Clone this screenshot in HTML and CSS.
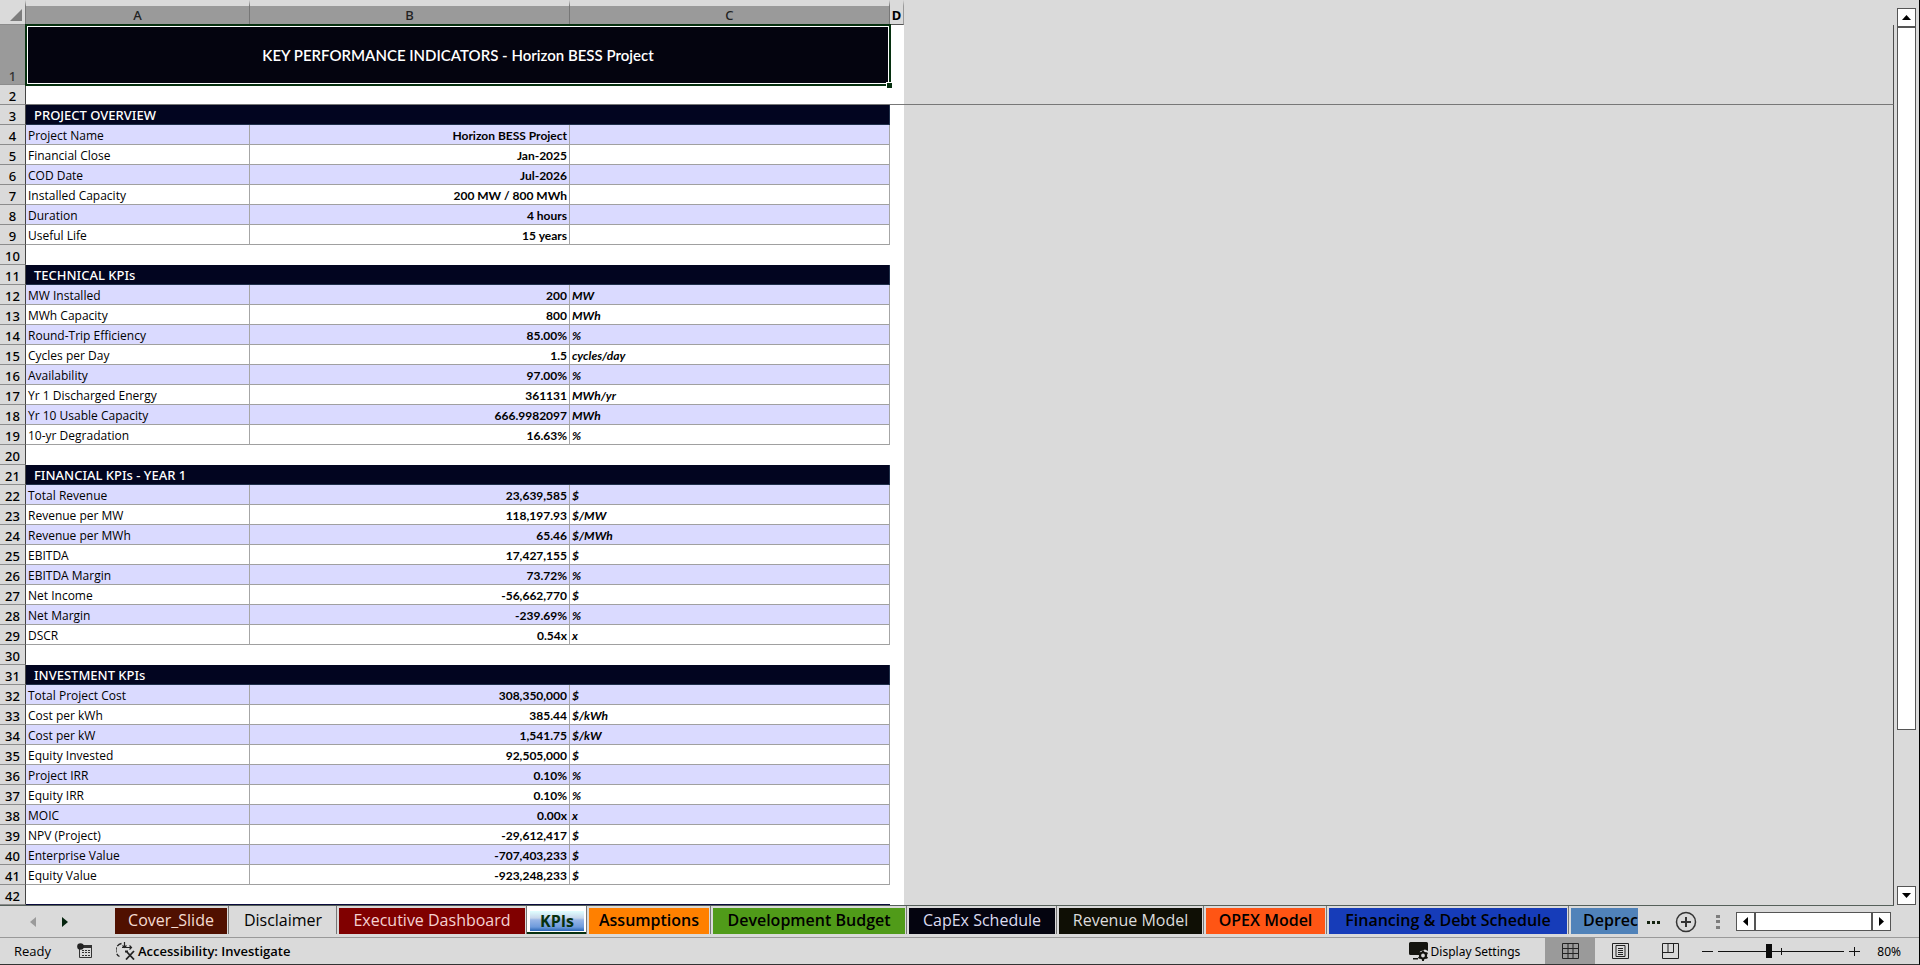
FILE: index.html
```html
<!DOCTYPE html>
<html lang="en">
<head>
<meta charset="utf-8">
<title>KPIs - Horizon BESS Project</title>
<link rel="stylesheet" href="styles.css">
</head>
<body>
<div class="workbook">
  <main class="workspace">
    <div class="sheet">
      <table class="grid">
        <colgroup><col class="col-head"><col class="col-a"><col class="col-b"><col class="col-c"><col class="col-d"><col></colgroup>
        <thead>
          <tr class="letters">
            <th class="corner"><svg width="12" height="12" viewBox="0 0 12 12" aria-hidden="true"><path d="M12 0V12H0Z" fill="#7d7d7d"/></svg></th>
            <th scope="col" class="selected">A</th><th scope="col" class="selected">B</th><th scope="col" class="selected">C</th><th scope="col" class="letter-d">D</th><td class="outside"></td>
          </tr>
        </thead>
        <tbody>
          <tr class="title-row"><th scope="row">1</th><td colspan="3" class="title">KEY PERFORMANCE INDICATORS - Horizon BESS Project<span class="fill-handle"></span></td><td></td><td class="outside"></td></tr>
          <tr class="frozen"><th scope="row">2</th><td></td><td></td><td></td><td></td><td class="outside"></td></tr>
        </tbody>
        <tbody class="block">
          <tr class="section"><th scope="row">3</th><td colspan="3">PROJECT OVERVIEW</td><td></td><td class="outside"></td></tr>
          <tr><th scope="row">4</th><td>Project Name</td><td>Horizon BESS Project</td><td></td><td></td><td class="outside"></td></tr>
          <tr><th scope="row">5</th><td>Financial Close</td><td>Jan-2025</td><td></td><td></td><td class="outside"></td></tr>
          <tr><th scope="row">6</th><td>COD Date</td><td>Jul-2026</td><td></td><td></td><td class="outside"></td></tr>
          <tr><th scope="row">7</th><td>Installed Capacity</td><td>200 MW / 800 MWh</td><td></td><td></td><td class="outside"></td></tr>
          <tr><th scope="row">8</th><td>Duration</td><td>4 hours</td><td></td><td></td><td class="outside"></td></tr>
          <tr><th scope="row">9</th><td>Useful Life</td><td>15 years</td><td></td><td></td><td class="outside"></td></tr>
        </tbody>
        <tbody>
          <tr><th scope="row">10</th><td></td><td></td><td></td><td></td><td class="outside"></td></tr>
        </tbody>
        <tbody class="block">
          <tr class="section"><th scope="row">11</th><td colspan="3">TECHNICAL KPIs</td><td></td><td class="outside"></td></tr>
          <tr><th scope="row">12</th><td>MW Installed</td><td>200</td><td>MW</td><td></td><td class="outside"></td></tr>
          <tr><th scope="row">13</th><td>MWh Capacity</td><td>800</td><td>MWh</td><td></td><td class="outside"></td></tr>
          <tr><th scope="row">14</th><td>Round-Trip Efficiency</td><td>85.00%</td><td>%</td><td></td><td class="outside"></td></tr>
          <tr><th scope="row">15</th><td>Cycles per Day</td><td>1.5</td><td>cycles/day</td><td></td><td class="outside"></td></tr>
          <tr><th scope="row">16</th><td>Availability</td><td>97.00%</td><td>%</td><td></td><td class="outside"></td></tr>
          <tr><th scope="row">17</th><td>Yr 1 Discharged Energy</td><td>361131</td><td>MWh/yr</td><td></td><td class="outside"></td></tr>
          <tr><th scope="row">18</th><td>Yr 10 Usable Capacity</td><td>666.9982097</td><td>MWh</td><td></td><td class="outside"></td></tr>
          <tr><th scope="row">19</th><td>10-yr Degradation</td><td>16.63%</td><td>%</td><td></td><td class="outside"></td></tr>
        </tbody>
        <tbody>
          <tr><th scope="row">20</th><td></td><td></td><td></td><td></td><td class="outside"></td></tr>
        </tbody>
        <tbody class="block">
          <tr class="section"><th scope="row">21</th><td colspan="3">FINANCIAL KPIs - YEAR 1</td><td></td><td class="outside"></td></tr>
          <tr><th scope="row">22</th><td>Total Revenue</td><td>23,639,585</td><td>$</td><td></td><td class="outside"></td></tr>
          <tr><th scope="row">23</th><td>Revenue per MW</td><td>118,197.93</td><td>$/MW</td><td></td><td class="outside"></td></tr>
          <tr><th scope="row">24</th><td>Revenue per MWh</td><td>65.46</td><td>$/MWh</td><td></td><td class="outside"></td></tr>
          <tr><th scope="row">25</th><td>EBITDA</td><td>17,427,155</td><td>$</td><td></td><td class="outside"></td></tr>
          <tr><th scope="row">26</th><td>EBITDA Margin</td><td>73.72%</td><td>%</td><td></td><td class="outside"></td></tr>
          <tr><th scope="row">27</th><td>Net Income</td><td>-56,662,770</td><td>$</td><td></td><td class="outside"></td></tr>
          <tr><th scope="row">28</th><td>Net Margin</td><td>-239.69%</td><td>%</td><td></td><td class="outside"></td></tr>
          <tr><th scope="row">29</th><td>DSCR</td><td>0.54x</td><td>x</td><td></td><td class="outside"></td></tr>
        </tbody>
        <tbody>
          <tr><th scope="row">30</th><td></td><td></td><td></td><td></td><td class="outside"></td></tr>
        </tbody>
        <tbody class="block">
          <tr class="section"><th scope="row">31</th><td colspan="3">INVESTMENT KPIs</td><td></td><td class="outside"></td></tr>
          <tr><th scope="row">32</th><td>Total Project Cost</td><td>308,350,000</td><td>$</td><td></td><td class="outside"></td></tr>
          <tr><th scope="row">33</th><td>Cost per kWh</td><td>385.44</td><td>$/kWh</td><td></td><td class="outside"></td></tr>
          <tr><th scope="row">34</th><td>Cost per kW</td><td>1,541.75</td><td>$/kW</td><td></td><td class="outside"></td></tr>
          <tr><th scope="row">35</th><td>Equity Invested</td><td>92,505,000</td><td>$</td><td></td><td class="outside"></td></tr>
          <tr><th scope="row">36</th><td>Project IRR</td><td>0.10%</td><td>%</td><td></td><td class="outside"></td></tr>
          <tr><th scope="row">37</th><td>Equity IRR</td><td>0.10%</td><td>%</td><td></td><td class="outside"></td></tr>
          <tr><th scope="row">38</th><td>MOIC</td><td>0.00x</td><td>x</td><td></td><td class="outside"></td></tr>
          <tr><th scope="row">39</th><td>NPV (Project)</td><td>-29,612,417</td><td>$</td><td></td><td class="outside"></td></tr>
          <tr><th scope="row">40</th><td>Enterprise Value</td><td>-707,403,233</td><td>$</td><td></td><td class="outside"></td></tr>
          <tr><th scope="row">41</th><td>Equity Value</td><td>-923,248,233</td><td>$</td><td></td><td class="outside"></td></tr>
        </tbody>
        <tbody>
          <tr class="last"><th scope="row">42</th><td></td><td></td><td></td><td></td><td class="outside"></td></tr>
        </tbody>
      </table>
    </div>
    <div class="vscroll">
      <button class="scroll-btn" aria-label="Scroll up"><svg width="9" height="5" viewBox="0 0 9 5"><path d="M0 5L4.5 0L9 5Z"/></svg></button>
      <div class="vthumb"></div>
      <div class="vtrack"></div>
      <button class="scroll-btn" aria-label="Scroll down"><svg width="9" height="5" viewBox="0 0 9 5"><path d="M0 0L4.5 5L9 0Z"/></svg></button>
    </div>
  </main>

  <nav class="tabbar" aria-label="Sheets">
    <div class="tab-nav">
      <button aria-label="Previous sheet"><svg width="6" height="10" viewBox="0 0 6 10"><path d="M6 0V10L0 5Z" fill="#9a9a9a"/></svg></button>
      <button aria-label="Next sheet"><svg width="6" height="10" viewBox="0 0 6 10"><path d="M0 0V10L6 5Z" fill="#06250f"/></svg></button>
    </div>
    <div class="tabs">
      <button class="tab maroon">Cover_Slide</button>
      <button class="tab plain">Disclaimer</button>
      <button class="tab red">Executive Dashboard</button>
      <button class="tab active"><span>KPIs</span></button>
      <button class="tab orange">Assumptions</button>
      <button class="tab green">Development Budget</button>
      <button class="tab navy">CapEx Schedule</button>
      <button class="tab olive">Revenue Model</button>
      <button class="tab vermilion">OPEX Model</button>
      <button class="tab blue">Financing &amp; Debt Schedule</button>
      <button class="tab steel">Deprec</button>
    </div>
    <div class="tab-tools">
      <button class="more" aria-label="More sheets"><svg width="14" height="4" viewBox="0 0 14 4"><path d="M0 1h3v3H0zM5 1h3v3H5zM10 1h3v3h-3z" fill="#14230f"/></svg></button>
      <button class="add" aria-label="New sheet"><svg width="22" height="22" viewBox="0 0 22 22" fill="none" stroke="#333"><circle cx="11" cy="11" r="9.5" stroke-width="1.5"/><path d="M11 6v10M6 11h10" stroke-width="2"/></svg></button>
      <svg class="grip" width="4" height="14" viewBox="0 0 4 14"><path d="M0 0h4v3H0zM0 5h4v3H0zM0 11h4v3H0z" fill="#7d7d7d"/></svg>
      <div class="hscroll">
        <button class="scroll-btn" aria-label="Scroll left"><svg width="5" height="9" viewBox="0 0 5 9"><path d="M5 0V9L0 4.5Z"/></svg></button>
        <div class="hthumb"></div>
        <button class="scroll-btn" aria-label="Scroll right"><svg width="5" height="9" viewBox="0 0 5 9"><path d="M0 0V9L5 4.5Z"/></svg></button>
      </div>
    </div>
  </nav>

  <footer class="status">
    <span class="ready">Ready</span>
    <button class="macro" aria-label="Record macro"><svg width="16" height="16" viewBox="0 0 16 16"><path d="M2.500 6V14.500H14.500V2.500H6" fill="none" stroke="#333"/><path d="M6 2h9v3H6z" fill="#333"/><circle cx="3.500" cy="3.500" r="3.300" fill="#222"/><path d="M5 7.500h2M8 7.500h2M11 7.500h2M5 9.500h2M8 9.500h2M11 9.500h2M5 12.500h2M8 12.500h2M11 12.500h2" stroke="#333"/></svg></button>
    <button class="access"><svg width="20" height="18" viewBox="0 0 20 18" fill="none" stroke="#222"><path d="M5.500 1.500A7 7 0 0 0 3.500 14.500" stroke-width="1.300" stroke-dasharray="5 1.500"/><path d="M8.500 0v5M6 5.500h9.500M13.500 3.500l2 2l-2 2M6.500 3.500l2 2l2-2" stroke-width="1.200"/><path d="M10.500 9.500l7.500 8M18 9L10 17.500M9 9.500h3" stroke-width="1.800"/></svg>Accessibility: Investigate</button>
    <span class="spacer"></span>
    <button class="display"><svg width="20" height="19" viewBox="0 0 20 19"><path d="M1.500 0h16A1.500 1.500 0 0 1 19 1.500V9L16 7.500L11 9.500L10 13H1.500A1.500 1.500 0 0 1 0 11.500V1.500A1.500 1.500 0 0 1 1.500 0ZM4 16h5v1.500H4z" fill="#14140f"/><circle cx="14" cy="13.500" r="3" fill="none" stroke="#14140f" stroke-width="2.200"/><path d="M14 8.500v2M14 16.500v2.500M9.500 11l2 1M16.500 15l2 1.200M9.500 16.200l2-1.200M16.500 12l2-1" stroke="#14140f" stroke-width="2"/></svg>Display Settings</button>
    <div class="views">
      <button class="view current" aria-label="Normal view"><svg width="17" height="17" viewBox="0 0 17 17" fill="none" stroke="#222"><path d="M.5.5h16v15H.5zM6 .5v15M11 .5v15M.5 5.500h16M.5 10.500h16"/></svg></button>
      <button class="view" aria-label="Page layout"><svg width="17" height="17" viewBox="0 0 17 17" fill="none" stroke="#222"><path d="M.5.5h16v15H.5zM4 2.500h9v11H4zM6 5.500h5M6 7.500h5M6 9.500h5M6 11.500h5"/></svg></button>
      <button class="view" aria-label="Page break preview"><svg width="17" height="17" viewBox="0 0 17 17" fill="none" stroke="#222"><path d="M.5.5h16v15H.5zM.5 9.500h11V.5M6 .5v9"/></svg></button>
    </div>
    <div class="zoom">
      <button aria-label="Zoom out"><svg width="11" height="11" viewBox="0 0 11 11"><path d="M0 5.500h11" stroke="#111"/></svg></button>
      <input type="range" min="0" max="100" value="40" aria-label="Zoom">
      <button aria-label="Zoom in"><svg width="11" height="11" viewBox="0 0 11 11"><path d="M0 5.500h11M5.500 1v9" stroke="#111"/></svg></button>
      <span class="percent">80%</span>
    </div>
  </footer>
</div>
</body>
</html>
```

FILE: styles.css
```css
* { box-sizing: border-box; }

body {
  margin: 0;
  background: #dadada;
  color: #000;
  font-family: "Noto Sans", "Open Sans", sans-serif;
  font-size: 12px;
}

button {
  margin: 0;
  padding: 0;
  border: 0;
  background: none;
  color: inherit;
  font: inherit;
  white-space: nowrap;
}

svg { display: block; flex: none; }

.workbook {
  display: flex;
  flex-direction: column;
  height: 100vh;
  border-right: 1px solid #000;
  border-bottom: 1px solid #333;
}

.workspace {
  display: flex;
  flex: 1;
  min-height: 0;
}

.sheet {
  flex: 1;
  min-width: 0;
  overflow: hidden;
  border-bottom: 1px solid #55605a;
}

/* Cell grid */
.grid {
  width: 100%;
  table-layout: fixed;
  border-collapse: separate;
  border-spacing: 0;
}

.col-head { width: 26px; }
.col-a { width: 224px; }
.col-b, .col-c { width: 320px; }
.col-d { width: 14px; }

.grid th, .grid td {
  height: 20px;
  padding: 0;
  line-height: 16px;
  vertical-align: bottom;
  white-space: nowrap;
}

.grid td { background: #fff; }

.grid tbody th {
  border-right: 1px solid #444;
  border-bottom: 1px solid #8c8c8c;
  background: #dadada;
  font-size: 13px;
  font-weight: 500;
  text-align: center;
}

.grid td.outside {
  border-right: 1px solid #4d4d4d;
  background: #dadada;
}

.grid .letters th, .grid .letters td {
  height: 25px;
  border-top: 6px solid #dadada;
  border-bottom: 1px solid #555;
  font-size: 13px;
  font-weight: 500;
  line-height: 18px;
}

.grid .letters .selected {
  border-right: 1px solid #777;
  background: #9a9a9a;
  color: #222;
}

.grid .letters .corner {
  border-right: 1px solid #777;
  border-bottom-color: #8c8c8c;
  padding: 0 3px 3px 10px;
}

.grid .letters .letter-d {
  border-right: 1px solid #999;
  font-weight: 700;
}

.grid .letters td.outside {
  border-right: 0;
  border-bottom: 0;
}

.grid .title-row th {
  height: 60px;
  background: #9a9a9a;
  color: #333;
}

.grid td.title {
  position: relative;
  background: #04040f;
  box-shadow: inset 0 0 0 2px #fff;
  outline: 2px solid #06300f;
  outline-offset: -1px;
  color: #fff;
  font-family: Lato, sans-serif;
  font-size: 15px;
  font-weight: 600;
  text-align: center;
  vertical-align: middle;
}

.fill-handle {
  position: absolute;
  right: -2px;
  bottom: -3px;
  width: 6px;
  height: 6px;
  border: 1px solid #fff;
  border-width: 1px 0 0 1px;
  background: #06300f;
}

.grid .frozen td { border-bottom: 1px solid #777; }

.block tr:nth-child(even) td:nth-child(-n+4) { background: #dadaff; }

.block td:nth-child(2), .block td:nth-child(3), .block td:nth-child(4) {
  border-right: 1px solid #a6a6a6;
  border-bottom: 1px solid #a0a0a0;
}

.block td:nth-child(2) {
  padding-left: 2px;
  font-family: "Open Sans", sans-serif;
  font-weight: 500;
}

.block td:nth-child(3) {
  padding-right: 2px;
  font-family: Lato, sans-serif;
  font-weight: 700;
  text-align: right;
}

.block td:nth-child(4) {
  padding-left: 2px;
  font-family: Lato, sans-serif;
  font-style: italic;
  font-weight: 700;
}

.block .section td:nth-child(2) {
  padding-left: 8px;
  border-color: #20304a;
  background: #020520;
  color: #fff;
  font-family: "Noto Sans", sans-serif;
  font-size: 13px;
  line-height: 18px;
}

.block .section td:nth-child(3) { border: 0; }

.block .section td.outside {
  border-bottom: 0;
  border-right-color: #4d4d4d;
}

.last td:nth-child(-n+4) { border-bottom: 1px solid #0a0a3c; }

/* Scroll bars */
.vscroll {
  display: flex;
  flex-direction: column;
  width: 25px;
  padding: 8px 3px 1px;
}

.scroll-btn {
  display: flex;
  align-items: center;
  justify-content: center;
  flex: none;
  width: 19px;
  height: 19px;
  border: 1px solid #555;
  background: #fff;
}

.vthumb {
  flex: 9;
  border: 1px solid #555;
  background: #fff;
}

.vtrack { flex: 2; }

.hscroll { display: flex; }

.hthumb {
  width: 117px;
  border: 1px solid #555;
  background: #fff;
}

/* Sheet tabs */
.tabbar {
  display: flex;
  height: 32px;
  border-bottom: 1px solid #999;
}

.tab-nav {
  display: flex;
  align-items: center;
  gap: 26px;
  width: 113px;
  padding-left: 30px;
}

.tabs {
  display: grid;
  grid-template-columns: 116px 108px 190px 60px 124px 196px 150px 147px 123px 242px 120px;
  flex: 1;
  min-width: 0;
  overflow: hidden;
}

.tab {
  height: 28px;
  border-top: 2px solid #dadada;
  border-right: 2px solid #dadada;
  border-left: 2px solid #dadada;
  box-shadow: -1px 0 #777;
  font-family: "Open Sans", sans-serif;
  font-size: 16px;
  font-weight: 600;
  line-height: 22px;
  text-align: center;
}

.tab:not(.active) { padding-bottom: 3px; }

.maroon { background: #501000; color: #f5dcd2; font-weight: 400; }
.plain { font-weight: 400; }
.red { background: #800000; color: #f5d2d2; font-weight: 400; }
.orange { background: #ff8000; }
.green { background: #509b19; }
.navy { background: #04040f; color: #dcdcf0; font-weight: 400; }
.olive { background: #0f0f05; color: #dcdcdc; font-weight: 400; }
.vermilion { background: #ff5514; }
.blue { background: #163cb9; }
.steel { padding-left: 12px; background: #5082b9; text-align: left; }

.tab.active {
  padding: 4px 3px 1px;
  border: 0;
  border-bottom: 2px solid #06300f;
  background: #fff;
  color: #06300f;
  font-weight: 700;
  line-height: 20px;
}

.tab.active span {
  display: block;
  background: linear-gradient(#e1ffff, #c8d7eb 35%, #96b4e6 45%, #6e9bdc 80%, #2864b4);
}

.tab-tools {
  display: flex;
  align-items: center;
  padding: 0 28px 0 9px;
}

.add { margin: 0 19px 0 14px; }
.grip { margin-right: 16px; }

/* Status bar */
.status {
  display: flex;
  align-items: center;
  height: 26px;
}

.ready {
  width: 77px;
  padding-left: 14px;
  font-family: "Open Sans", sans-serif;
  font-size: 13px;
}

.macro { width: 39px; }

.access, .display {
  display: flex;
  align-items: center;
  gap: 2px;
}

.access {
  font-family: "Open Sans", sans-serif;
  font-size: 13px;
  font-weight: 600;
}

.spacer { flex: 1; }
.display { margin-right: 25px; }

.views { display: flex; height: 100%; }

.view {
  display: flex;
  align-items: center;
  justify-content: center;
  width: 50px;
}

.current { background: #9a9a9a; }

.zoom {
  display: flex;
  align-items: center;
  gap: 5px;
  padding: 0 18px 0 7px;
}

.zoom input {
  width: 126px;
  height: 14px;
  margin: 0;
  appearance: none;
  background:
    linear-gradient(#111, #111) 50% 50% / 1px 7px no-repeat,
    linear-gradient(#111, #111) 0 50% / 100% 1px no-repeat;
}

.zoom input::-webkit-slider-thumb {
  width: 6px;
  height: 14px;
  appearance: none;
  background: #0a0a0a;
}

.percent { margin-left: 12px; }
```
